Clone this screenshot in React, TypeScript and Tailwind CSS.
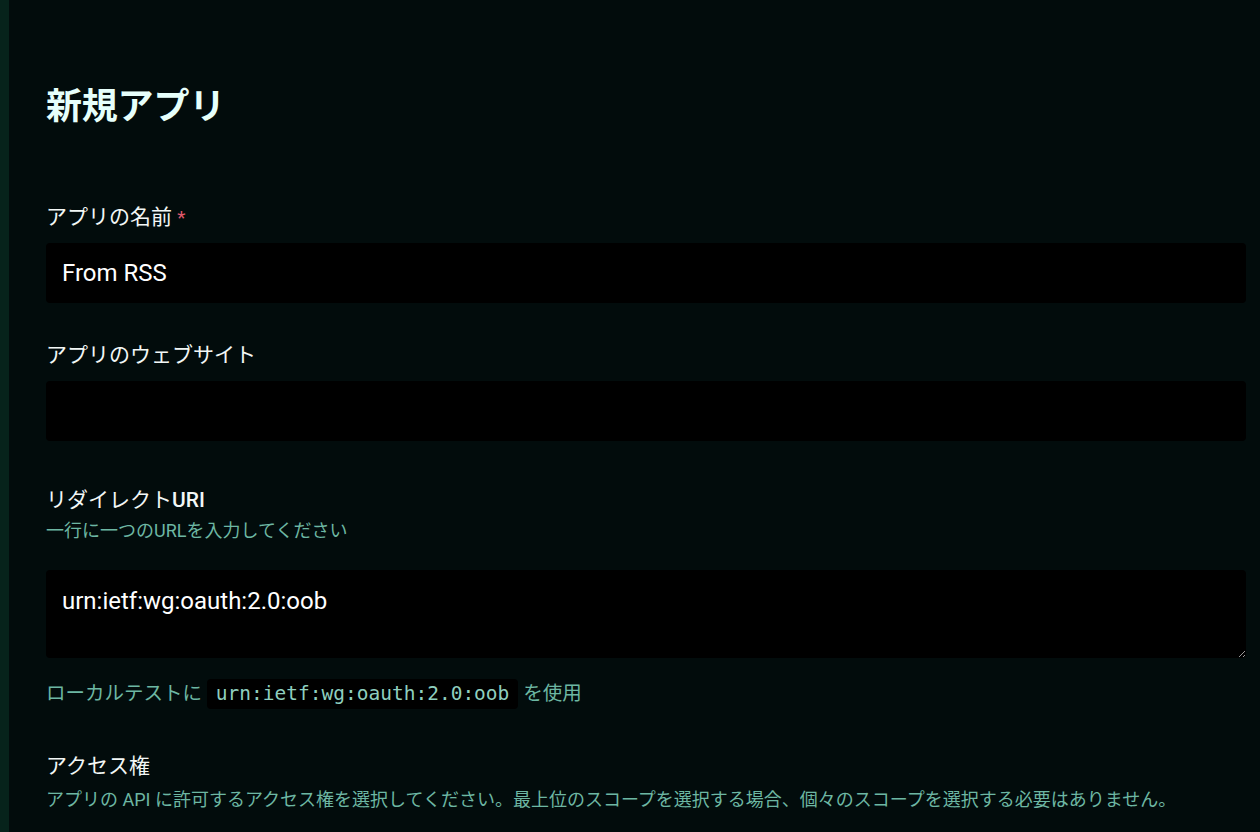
import React from "react";

const jp = { fontFamily: 'Roboto, "Noto Sans CJK JP", sans-serif' };

export default function App() {
  return (
    <div className="flex min-h-[832px] w-full bg-[#020c0c]" style={jp}>
      <div className="w-[9px] shrink-0 bg-[#06231b]" />
      <div className="flex flex-1 flex-col pl-[37px] pr-[14px]">
        <h1 className="mt-[85px] text-[36px] font-bold leading-[44px] tracking-[-0.2px] text-[#e6fffb]">
          新規アプリ
        </h1>

        <label className="mt-[75px] text-[21px] leading-[27px] text-[#f2f7f6]">
          アプリの名前 <span className="text-[19px] text-[#e05a6e]">*</span>
        </label>
        <input
          className="mt-[12px] h-[60px] w-full rounded-[4px] bg-black px-[16px] text-[24px] text-white outline-none"
          defaultValue="From RSS"
        />

        <label className="mt-[39px] text-[21px] leading-[27px] text-[#f2f7f6]">
          アプリのウェブサイト
        </label>
        <input
          className="mt-[12px] h-[60px] w-full rounded-[4px] bg-black px-[16px] text-[24px] text-white outline-none"
          defaultValue=""
        />

        <label className="mt-[46px] text-[21px] leading-[27px] text-[#f2f7f6]">
          リダイレクト<span className="font-medium">URI</span>
        </label>
        <div className="mt-[5px] text-[18px] leading-[24px] text-[#6db7a3]">
          一行に一つのURLを入力してください
        </div>
        <textarea
          className="mt-[27px] block h-[88px] w-full rounded-[4px] bg-black px-[16px] pt-[16px] text-[24px] leading-[30px] text-white outline-none"
          defaultValue="urn:ietf:wg:oauth:2.0:oob"
        />

        <div className="mt-[21px] flex h-[30px] items-center text-[19.5px] text-[#6db7a3]">
          <span>ローカルテストに&nbsp;</span>
          <code
            className="flex h-[30px] items-center rounded-[4px] bg-black px-[9px] text-[19.5px] text-[#8fcfbf]"
            style={{ fontFamily: '"DejaVu Sans Mono", monospace' }}
          >
            urn:ietf:wg:oauth:2.0:oob
          </code>
          <span>&nbsp;を使用</span>
        </div>

        <label className="mt-[44px] text-[21px] leading-[27px] text-[#f2f7f6]">
          アクセス権
        </label>
        <div className="mt-[8px] text-[18px] leading-[24px] text-[#6db7a3]">
          アプリの API に許可するアクセス権を選択してください。最上位のスコープを選択する場合、個々のスコープを選択する必要はありません。
        </div>
      </div>
    </div>
  );
}
